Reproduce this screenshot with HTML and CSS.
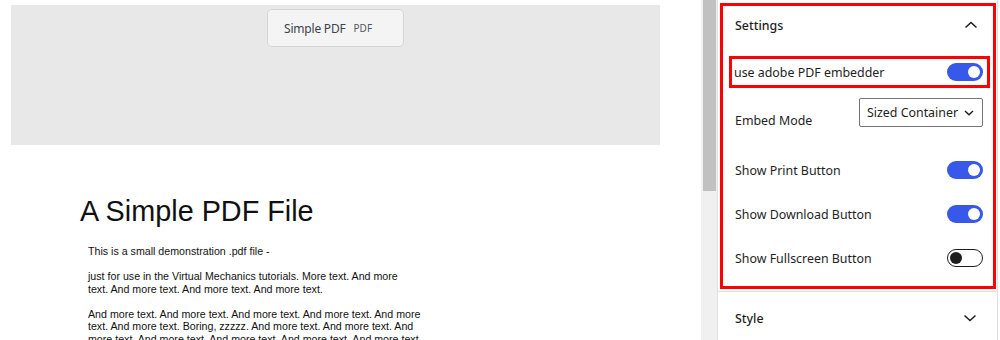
FILE: index.html
```html
<!DOCTYPE html>
<html lang="en">
<head>
<meta charset="utf-8">
<title>Simple PDF block</title>
<link rel="stylesheet" href="styles.css">
</head>
<body>
<div class="app">
  <main class="canvas">
    <div class="placeholder">
      <div class="block-card">
        <span class="block-title">Simple PDF</span>
        <span class="block-tag">PDF</span>
      </div>
    </div>
    <article class="pdf-page">
      <h1 class="pdf-title">A Simple PDF File</h1>
      <p class="pdf-text">This is a small demonstration .pdf file -</p>
      <p class="pdf-text">just for use in the Virtual Mechanics tutorials. More text. And more<br>text. And more text. And more text. And more text.</p>
      <p class="pdf-text">And more text. And more text. And more text. And more text. And more<br>text. And more text. Boring, zzzzz. And more text. And more text. And<br>more text. And more text. And more text. And more text. And more text.</p>
    </article>
  </main>
  <div class="scrollbar"><div class="scroll-thumb"></div></div>
  <aside class="sidebar">
    <section class="panel panel-settings">
      <header class="panel-head">
        <span class="panel-title">Settings</span>
        <svg class="chev" width="14" height="8" viewBox="0 0 14 8"><path d="M1.5 6.5 L7 1.5 L12.5 6.5" fill="none" stroke="#1e1e1e" stroke-width="1.5"/></svg>
      </header>
      <div class="row row-toggle row-highlight">
        <span class="label">use adobe PDF embedder</span>
        <span class="toggle on"><span class="knob"></span></span>
      </div>
      <div class="row row-select">
        <span class="label label-select">Embed Mode</span>
        <div class="select">
          <span>Sized Container</span>
          <svg width="10" height="6" viewBox="0 0 10 6"><path d="M1 1 L5 4.8 L9 1" fill="none" stroke="#1e1e1e" stroke-width="1.4"/></svg>
        </div>
      </div>
      <div class="row row-toggle row-first">
        <span class="label">Show Print Button</span>
        <span class="toggle on"><span class="knob"></span></span>
      </div>
      <div class="row row-toggle">
        <span class="label">Show Download Button</span>
        <span class="toggle on"><span class="knob"></span></span>
      </div>
      <div class="row row-toggle">
        <span class="label">Show Fullscreen Button</span>
        <span class="toggle off"><span class="knob"></span></span>
      </div>
    </section>
    <section class="panel panel-style">
      <header class="panel-head panel-head-style">
        <span class="panel-title">Style</span>
        <svg class="chev" width="14" height="8" viewBox="0 0 14 8"><path d="M1.5 1.5 L7 6.5 L12.5 1.5" fill="none" stroke="#1e1e1e" stroke-width="1.5"/></svg>
      </header>
    </section>
  </aside>
</div>
</body>
</html>
```
FILE: styles.css
```css
html, body {
  margin: 0;
  padding: 0;
  background: #ffffff;
}
body {
  width: 1000px;
  height: 340px;
  overflow: hidden;
}
.app {
  display: flex;
  height: 340px;
}
.canvas {
  width: 701px;
  flex: none;
  background: #ffffff;
}
.placeholder {
  margin: 5px 0 0 11px;
  width: 649px;
  height: 140px;
  background: #e8e8e8;
  display: flex;
  justify-content: center;
  align-items: flex-start;
}
.block-card {
  margin-top: 4px;
  width: 137px;
  height: 38px;
  box-sizing: border-box;
  background: #f4f4f4;
  border: 1px solid #d6d6d6;
  border-radius: 5px;
  display: flex;
  align-items: center;
  padding-left: 16px;
  gap: 8px;
  font-family: "Noto Sans", sans-serif;
}
.block-title {
  font-size: 12px;
  color: #3c434a;
  letter-spacing: -0.2px;
}
.block-tag {
  font-size: 10px;
  color: #50575e;
}
.pdf-page {
  padding: 50px 0 0 80px;
  font-family: "Liberation Sans", Arial, sans-serif;
  color: #111111;
}
.pdf-title {
  margin: 0;
  font-weight: normal;
  font-size: 28.8px;
  line-height: 32px;
}
.pdf-text {
  margin: 0 0 12.3px 8px;
  font-size: 10.65px;
  line-height: 12.7px;
}
.pdf-title + .pdf-text {
  margin-top: 18px;
}
.scrollbar {
  width: 16px;
  flex: none;
  background: #f0f0f0;
}
.scroll-thumb {
  margin-left: 2px;
  width: 13px;
  height: 191px;
  background: #c1c1c1;
}
.sidebar {
  width: 279px;
  flex: none;
  border-left: 1px solid #e0e0e0;
  border-right: 1px solid #e0e0e0;
  font-family: "Noto Sans", sans-serif;
  font-size: 12.4px;
  color: #1e1e1e;
}
.panel-settings {
  margin: 3px 0 2px 2px;
  width: 276px;
  height: 286px;
  box-sizing: border-box;
  border: 3px solid #ff0000;
}
.panel-head {
  height: 38px;
  display: flex;
  align-items: center;
  justify-content: space-between;
  padding: 0 15px 0 12px;
}
.panel-title {
  font-weight: 500;
}
.chev {
  display: block;
}
.row {
  display: flex;
  justify-content: space-between;
  padding: 0 10px 0 12px;
}
.row-toggle {
  align-items: center;
  height: 18px;
  margin-top: 26px;
}
.row-highlight {
  margin: 12px 3px 0 6px;
  height: 26px;
  border: 3px solid #ff0000;
  padding: 0 4px 0 2px;
}
.row-first {
  margin-top: 31px;
}
.row-select {
  margin-top: 10px;
  align-items: flex-start;
}
.label {
  white-space: nowrap;
}
.label-select {
  padding-top: 14px;
  line-height: 18px;
}
.select {
  width: 124px;
  height: 29px;
  box-sizing: border-box;
  border: 1px solid #757575;
  border-radius: 2px;
  display: flex;
  align-items: center;
  justify-content: space-between;
  padding: 0 8px 0 7px;
}
.toggle {
  width: 36px;
  height: 18px;
  box-sizing: border-box;
  border-radius: 9px;
  display: flex;
  align-items: center;
  flex: none;
}
.toggle.on {
  background: #3858e9;
  justify-content: flex-end;
  padding-right: 3px;
}
.toggle.on .knob {
  background: #ffffff;
}
.toggle.off {
  background: #ffffff;
  border: 1px solid #1e1e1e;
  padding-left: 2px;
}
.toggle.off .knob {
  background: #1e1e1e;
}
.knob {
  width: 12px;
  height: 12px;
  border-radius: 50%;
}
.panel-style {
  border-top: 1px solid #e0e0e0;
}
.panel-head-style {
  height: 52px;
  padding: 0 20px 0 17px;
}
```
